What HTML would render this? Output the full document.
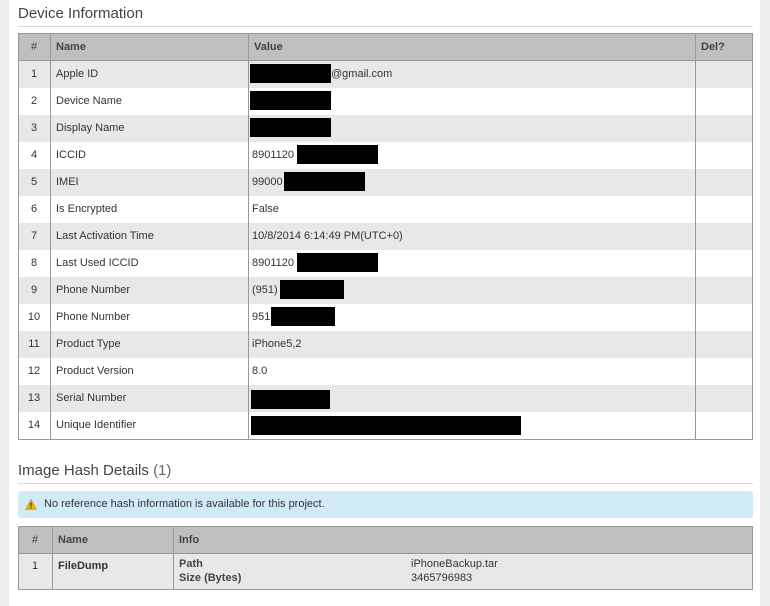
<!DOCTYPE html>
<html><head><meta charset="utf-8"><style>
*{margin:0;padding:0;box-sizing:border-box}
body{width:770px;height:606px;background:#fff;position:relative;overflow:hidden;font-family:"Liberation Sans",sans-serif;color:#333;font-size:11px}
.a{position:absolute}
.h{font-size:15px;color:#444}
.rule{height:1px;background:#d5dcdc}
.row{position:absolute;left:18px;width:735px;height:28px;border:1px solid #999;border-top:none}
.c{position:absolute;top:0;height:100%;border-left:1px solid #999;padding-left:5px;line-height:26px;white-space:nowrap}
.blk{position:absolute;background:#000}
</style></head><body>
<div class="a" style="left:0;top:0;width:9px;height:606px;background:#ececec"></div>
<div class="a" style="left:760px;top:0;width:10px;height:606px;background:#ececec"></div>
<div class="a h" style="left:18px;top:5px">Device Information</div>
<div class="a rule" style="left:18px;top:26px;width:735px"></div>

<div class="row" style="top:33px;height:28px;border-top:1px solid #999;background:#bfbfbf;font-weight:bold;color:#444">
<div class="c" style="left:-1px;border:none;width:32px;text-align:center;padding:0;font-weight:normal">#</div>
<div class="c" style="left:31px">Name</div>
<div class="c" style="left:229px">Value</div>
<div class="c" style="left:676px">Del?</div>
</div>
<div id="rows"></div>

<div class="a h" style="left:18px;top:462px">Image Hash Details <span style="color:#666">(1)</span></div>
<div class="a rule" style="left:18px;top:483px;width:735px"></div>
<div class="a" style="left:18px;top:491px;width:735px;height:27px;background:#d1ebf6;border-radius:3px;line-height:27px;padding-left:26px;color:#333">No reference hash information is available for this project.</div>
<svg class="a" style="left:25px;top:499px" width="12" height="11" viewBox="0 0 12 11"><path d="M6 0.5L11.5 10.5H0.5Z" fill="#f0b400" stroke="#c98a00" stroke-width="0.6"/><rect x="5.4" y="3.5" width="1.2" height="4" fill="#333"/><rect x="5.4" y="8.3" width="1.2" height="1.2" fill="#333"/></svg>

<div class="row" style="top:526px;border-top:1px solid #999;background:#bfbfbf;color:#444;font-weight:bold">
<div class="c" style="left:-1px;border:none;width:34px;text-align:center;padding:0;font-weight:normal">#</div>
<div class="c" style="left:33px">Name</div>
<div class="c" style="left:154px">Info</div>
</div>
<div class="row" style="top:554px;height:36px;background:#e8e8e8">
<div class="c" style="left:-1px;border:none;width:34px;text-align:center;padding:0;line-height:24px">1</div>
<div class="c" style="left:33px;line-height:24px;font-weight:bold">FileDump</div>
<div class="c" style="left:154px;line-height:14px;padding-top:3px;font-weight:bold;color:#444">Path<br>Size (Bytes)</div>
<div class="c" style="left:387px;border:none;line-height:14px;padding-top:3px">iPhoneBackup.tar<br>3465796983</div>
</div>

<script>
var d=[["Apple ID","<span style='margin-left:79px'>@gmail.com</span>"],["Device Name",""],["Display Name",""],["ICCID","8901120"],["IMEI","99000"],["Is Encrypted","False"],["Last Activation Time","10/8/2014 6:14:49 PM(UTC+0)"],["Last Used ICCID","8901120"],["Phone Number","(951)"],["Phone Number","951"],["Product Type","iPhone5,2"],["Product Version","8.0"],["Serial Number",""],["Unique Identifier",""]];
var h="";
for(var i=0;i<14;i++){var t=61+i*27;
h+='<div class="row" style="top:'+t+'px;background:'+(i%2?'#fff':'#e8e8e8')+'"><div class="c" style="left:-1px;border:none;width:32px;text-align:center;padding:0">'+(i+1)+'</div><div class="c" style="left:31px">'+d[i][0]+'</div><div class="c" style="left:229px;padding-left:3px">'+d[i][1]+'</div><div class="c" style="left:676px"></div></div>';}
var b=[[250,331,64],[250,331,91],[250,331,118],[297,378,145],[284,365,172],[297,378,253],[280,344,280],[271,335,307],[251,330,390],[251,521,416]];
for(var j=0;j<b.length;j++)h+='<div class="blk" style="left:'+b[j][0]+'px;width:'+(b[j][1]-b[j][0])+'px;top:'+b[j][2]+'px;height:19px"></div>';
document.getElementById("rows").innerHTML=h;
</script>
</body></html>
